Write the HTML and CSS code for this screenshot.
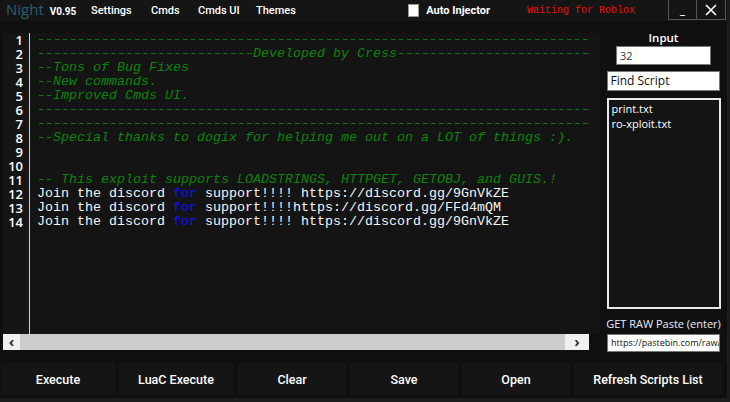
FILE: index.html
```html
<!DOCTYPE html>
<html lang="en">
<head>
    <meta charset="UTF-8">
    <title>Night V0.95</title>
    <link rel="stylesheet" href="styles.css">
</head>
<body>
    <div class="window">
        <div class="titlebar">
            <div class="brand">Night <span class="ver">V0.95</span></div>
            <div class="menu">
                <span class="m-settings">Settings</span>
                <span class="m-cmds">Cmds</span>
                <span class="m-cmdsui">Cmds UI</span>
                <span class="m-themes">Themes</span>
            </div>
            <div class="auto"><span class="check"></span>Auto Injector</div>
            <div class="waiting">Waiting for Roblox</div>
            <div class="winbtns">
                <div class="winbtn">_</div>
                <div class="winbtn close">
                    <svg width="12" height="12" viewBox="0 0 12 12"><path d="M1 1 L11 11 M11 1 L1 11" stroke="#fff" stroke-width="1.6"/></svg>
                </div>
            </div>
        </div>

        <div class="main">
            <div class="editor-col">
                <div class="editor">
                    <div class="gutter">
                        <div>1</div><div>2</div><div>3</div><div>4</div><div>5</div><div>6</div><div>7</div>
                        <div>8</div><div>9</div><div>10</div><div>11</div><div>12</div><div>13</div><div>14</div>
                    </div>
                    <div class="code">
                        <div class="ln c">---------------------------------------------------------------------</div>
                        <div class="ln c">---------------------------Developed by Cress------------------------</div>
                        <div class="ln c">--Tons of Bug Fixes</div>
                        <div class="ln c">--New commands.</div>
                        <div class="ln c">--Improved Cmds UI.</div>
                        <div class="ln c">---------------------------------------------------------------------</div>
                        <div class="ln c">---------------------------------------------------------------------</div>
                        <div class="ln c">--Special thanks to dogix for helping me out on a LOT of things :).</div>
                        <div class="ln">&nbsp;</div>
                        <div class="ln">&nbsp;</div>
                        <div class="ln c">-- This exploit supports LOADSTRINGS, HTTPGET, GETOBJ, and GUIS.!</div>
                        <div class="ln">Join the discord <span class="kw">for</span> support!!!! https://discord.gg/9GnVkZE</div>
                        <div class="ln">Join the discord <span class="kw">for</span> support!!!!https://discord.gg/FFd4mQM</div>
                        <div class="ln">Join the discord <span class="kw">for</span> support!!!! https://discord.gg/9GnVkZE</div>
                    </div>
                </div>
                <div class="hscroll">
                    <div class="arrow">&#8249;</div>
                    <div class="track"></div>
                    <div class="arrow right">&#8250;</div>
                </div>
            </div>

            <div class="side">
                <div class="label">Input</div>
                <div class="input small-input">32</div>
                <div class="input find">Find Script</div>
                <div class="list">
                    <div>print.txt</div>
                    <div>ro-xploit.txt</div>
                </div>
                <div class="raw-label">GET RAW Paste (enter)</div>
                <div class="input raw">https://pastebin.com/raw/e</div>
            </div>
        </div>

        <div class="buttons">
            <div class="btn b1">Execute</div>
            <div class="btn b2">LuaC Execute</div>
            <div class="btn b3">Clear</div>
            <div class="btn b4">Save</div>
            <div class="btn b5">Open</div>
            <div class="btn b6">Refresh Scripts List</div>
        </div>
    </div>
</body>
</html>
```

FILE: styles.css
```css
body {
    margin: 0;
    background: #1c1c1c;
    font-family: "Open Sans", Arial, sans-serif;
    color: #fff;
}
.window {
    width: 727px;
    height: 398px;
    background: #0f0f0f;
    display: flex;
    flex-direction: column;
    overflow: hidden;
}
.titlebar {
    height: 21px;
    background: #151515;
    display: flex;
    align-items: center;
    white-space: nowrap;
}
.brand {
    font-family: "Open Sans", sans-serif;
    font-size: 15px;
    color: #2c5d6c;
    margin-left: 6px;
    width: 85px;
    flex-shrink: 0;
    line-height: 21px;
}
.ver {
    font-family: Roboto, sans-serif;
    font-weight: bold;
    font-size: 10px;
    color: #fff;
    margin-left: 2px;
}
.menu {
    display: flex;
    font-family: Roboto, sans-serif;
    font-size: 11px;
    font-weight: 500;
}
.m-settings { width: 40px; }
.m-cmds { margin-left: 20px; width: 27px; }
.m-cmdsui { margin-left: 20px; width: 39px; }
.m-themes { margin-left: 19px; width: 39px; }
.auto {
    display: flex;
    align-items: center;
    margin-left: 113px;
    font-family: Roboto, sans-serif;
    font-size: 11px;
    font-weight: 700;
    width: 82px;
}
.check {
    width: 11px;
    height: 11px;
    background: #fff;
    border: 1px solid #999;
    margin-right: 7px;
}
.waiting {
    font-family: "Liberation Mono", monospace;
    font-size: 10px;
    color: #e81010;
    margin-left: 37px;
}
.winbtns {
    display: flex;
    margin-left: auto;
    align-self: flex-start;
    margin-right: 1px;
}
.winbtn {
    width: 29px;
    height: 20px;
    border: 1px solid #555;
    border-top: none;
    box-sizing: border-box;
    display: flex;
    align-items: center;
    justify-content: center;
    font-size: 12px;
    font-weight: bold;
    line-height: 14px;
}
.winbtn.close { border-left: none; }

.main {
    display: flex;
    margin-top: 12px;
}
.editor-col {
    margin-left: 3px;
    width: 597px;
}
.editor {
    height: 301px;
    background: #141414;
    display: flex;
}
.gutter {
    width: 26px;
    flex-shrink: 0;
    background: #151515;
    border-right: 1px solid #d0d0d0;
    text-align: right;
    font-family: "Open Sans", sans-serif;
    font-weight: 600;
    font-size: 13px;
    line-height: 14px;
}
.gutter div { padding-right: 6px; }
.code {
    margin-left: 7px;
    font-family: "Liberation Mono", monospace;
    font-size: 13.33px;
    line-height: 14px;
    color: #f4f4f4;
    overflow: hidden;
    flex: 1;
}
.ln { white-space: pre; }
.c {
    color: #0a850a;
    font-style: italic;
}
.kw { color: #1010ff; }
.hscroll {
    height: 16px;
    display: flex;
    width: 586px;
    background: #f0f0f0;
}
.arrow {
    width: 17px;
    color: #333;
    font-size: 15px;
    line-height: 14px;
    text-align: center;
    font-weight: bold;
}
.arrow.right { width: 24px; }
.track {
    flex: 1;
    background: #cdcdcd;
}

.side {
    width: 127px;
    display: flex;
    flex-direction: column;
    align-items: center;
}
.label {
    font-size: 11.5px;
    font-weight: 600;
    line-height: 14px;
    margin-top: -2px;
}
.input {
    background: #fff;
    color: #111;
    border: 1px solid #777;
    box-sizing: border-box;
    font-size: 11px;
    padding-left: 3px;
}
.small-input {
    width: 95px;
    height: 19px;
    line-height: 17px;
    margin-top: 1px;
    color: #334;
}
.find {
    width: 113px;
    height: 20px;
    line-height: 18px;
    margin-top: 6px;
    margin-left: -1px;
    font-size: 12px;
}
.list {
    width: 114px;
    height: 211px;
    margin-top: 7px;
    background: #141414;
    border: 2px solid #e8e8e8;
    box-sizing: border-box;
    font-size: 11px;
    line-height: 15px;
    padding: 1px 3px;
}
.raw-label {
    font-family: "Open Sans", sans-serif;
    font-size: 11px;
    color: #e6eef8;
    margin-top: 8px;
    line-height: 14px;
}
.raw {
    width: 113px;
    height: 18px;
    font-size: 9px;
    line-height: 16px;
    margin-top: 3px;
    overflow: hidden;
    white-space: nowrap;
}

.buttons {
    display: flex;
    margin-top: 11px;
    margin-left: 1px;
    gap: 4px;
}
.btn {
    height: 32px;
    background: #151515;
    font-family: Roboto, sans-serif;
    font-weight: 500;
    font-size: 12.5px;
    display: flex;
    align-items: center;
    justify-content: center;
}
.b1 { width: 114px; }
.b2 { width: 114px; }
.b3 { width: 108px; margin-left: 1px; }
.b4 { width: 108px; }
.b5 { width: 108px; }
.b6 { width: 148px; }
```
